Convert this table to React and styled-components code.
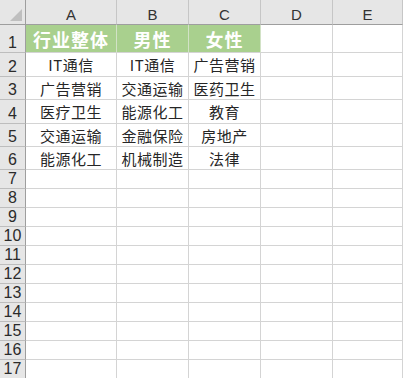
import React from "react";
import styled, { createGlobalStyle } from "styled-components";

const GlobalStyle = createGlobalStyle`
  html, body {
    margin: 0;
    padding: 0;
    background: #ffffff;
    overflow: hidden;
  }
`;

const COLS = ["A", "B", "C", "D", "E"];
const ROW_HEIGHTS = [28, 24, 23, 24, 23, 23, 19, 19, 19, 19, 19, 19, 19, 19, 19, 19, 19];

const HEAD = ["行业整体", "男性", "女性"];
const DATA = [
  ["IT通信", "IT通信", "广告营销"],
  ["广告营销", "交通运输", "医药卫生"],
  ["医疗卫生", "能源化工", "教育"],
  ["交通运输", "金融保险", "房地产"],
  ["能源化工", "机械制造", "法律"],
];

const Sheet = styled.div`
  display: grid;
  grid-template-columns: 26px 91px 72px 72px 72px 1fr;
  grid-template-rows: 25px ${ROW_HEIGHTS.map((h) => `${h}px`).join(" ")};
  width: 403px;
  height: 378px;
  overflow: hidden;
  font-family: "Noto Sans CJK SC", "Noto Sans", sans-serif;
`;

const Corner = styled.div`
  position: relative;
  background: #e6e6e6;
  border-right: 1px solid #9e9e9e;
  border-bottom: 1px solid #9e9e9e;
  box-sizing: border-box;
  &::after {
    content: "";
    position: absolute;
    right: 3px;
    bottom: 3px;
    width: 0;
    height: 0;
    border-left: 12px solid transparent;
    border-bottom: 12px solid #bfbfbf;
  }
`;

const ColHead = styled.div`
  display: flex;
  align-items: flex-end;
  justify-content: center;
  padding-bottom: 2px;
  box-sizing: border-box;
  background: #e6e6e6;
  border-right: 1px solid #c6c6c6;
  border-bottom: 1px solid #9e9e9e;
  font-family: "Liberation Sans", Arial, sans-serif;
  font-size: 15px;
  line-height: 1;
  color: #333333;
`;

const RowHead = styled.div`
  display: flex;
  align-items: flex-end;
  justify-content: center;
  padding-bottom: 1px;
  box-sizing: border-box;
  background: #e6e6e6;
  border-right: 1px solid #9e9e9e;
  border-bottom: 1px solid #bdbdbd;
  font-family: "Liberation Sans", Arial, sans-serif;
  font-size: 16px;
  line-height: 1;
  color: #2b2b2b;
`;

const Cell = styled.div`
  display: flex;
  align-items: center;
  justify-content: center;
  box-sizing: border-box;
  border-right: 1px solid ${(p) => (p.$head ? "#d2e2c6" : "#d4d4d4")};
  border-bottom: 1px solid #d4d4d4;
  background: ${(p) => (p.$head ? "#a9d08e" : "#ffffff")};
  color: ${(p) => (p.$head ? "#ffffff" : "#262626")};
  font-size: ${(p) => (p.$head ? "18px" : "15px")};
  font-weight: ${(p) => (p.$head ? 700 : 400)};
  letter-spacing: ${(p) => (p.$head ? "1px" : "0.5px")};
  white-space: nowrap;
  overflow: hidden;
  line-height: 1;
`;

export default function App() {
  return (
    <>
      <GlobalStyle />
      <Sheet>
        <Corner />
        {COLS.map((c) => (
          <ColHead key={c}>{c}</ColHead>
        ))}
        {ROW_HEIGHTS.map((_, r) => {
          const values = r === 0 ? HEAD : DATA[r - 1] || [];
          return (
            <React.Fragment key={r}>
              <RowHead>{r + 1}</RowHead>
              {COLS.map((c, ci) => (
                <Cell key={c} $head={r === 0 && ci < 3}>
                  {values[ci] || ""}
                </Cell>
              ))}
            </React.Fragment>
          );
        })}
      </Sheet>
    </>
  );
}
